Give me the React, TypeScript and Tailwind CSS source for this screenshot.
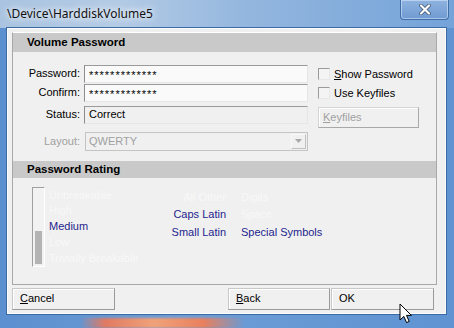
import React from "react";

function Input({ children, readOnly }: { children?: React.ReactNode; readOnly?: boolean }) {
  return (
    <div
      className={
        "h-[18px] w-[224px] flex items-center pl-[4px] border-t border-l border-t-[#9a9a9a] border-l-[#8c8c8c] border-b border-r border-b-[#e6e6e6] border-r-[#e6e6e6] " +
        (readOnly ? "bg-[#f0f0f0]" : "bg-[#fafafa]")
      }
    >
      {children}
    </div>
  );
}

function Button({ children, className }: { children: React.ReactNode; className?: string }) {
  return (
    <div
      className={
        "h-[22px] flex items-center pl-[7px] border border-t-[#c8c8c8] border-l-[#c8c8c8] border-b-[#9a9a9a] border-r-[#9a9a9a] shadow-[inset_1px_1px_0_#ffffff] bg-[#f0f0f0] text-[#000]" +
        " " +
        (className ?? "")
      }
    >
      {children}
    </div>
  );
}

function Check({ label, u }: { label: string; u?: boolean }) {
  return (
    <div className="flex items-center h-[12px]">
      <div className="w-[12px] h-[12px] border border-t-[#9a9a9a] border-l-[#9a9a9a] border-b-[#e8e8e8] border-r-[#e8e8e8] bg-[#f4f4f4]" />
      <span className="ml-[4px] leading-[12px]">
        {u ? (
          <>
            <span className="underline underline-offset-[1px]">S</span>
            {label.slice(1)}
          </>
        ) : (
          label
        )}
      </span>
    </div>
  );
}

export default function App() {
  const inactive = "text-[#f8f8f8]";
  const active = "text-[#1e1e8e]";
  return (
    <div
      className="w-[454px] h-[328px] relative overflow-hidden flex flex-col bg-[linear-gradient(90deg,#5c8fcf_0%,#6d9dd6_40%,#5f93d2_100%)]"
      style={{ fontFamily: '"Liberation Sans", Arial, sans-serif' }}
    >
      {/* title bar */}
      <div className="h-[28px] flex items-start bg-[linear-gradient(90deg,#a9c3e0_0%,#b4cbe5_25%,#93b6de_55%,#74a3d9_100%)]">
        <span
          className="ml-[7px] mt-[5px] text-[12px] leading-[18px] text-[#111] [text-shadow:0_0_6px_#ffffff,0_0_10px_#ffffff]"
          style={{ fontFamily: '"Noto Sans", "Open Sans", sans-serif' }}
        >
          \Device\HarddiskVolume5
        </span>
        <div className="ml-auto mr-[5px] w-[49px] h-[20px] rounded-b-[4px] border border-t-0 border-[#3f6da6] shadow-[inset_0_0_0_1px_rgba(220,235,255,0.55)] bg-[linear-gradient(180deg,#8fb3df,#6f9ad2)] flex items-center justify-center">
          <svg width="12" height="11" viewBox="0 0 12 11">
            <path d="M2 1.5 L10 9.5 M10 1.5 L2 9.5" stroke="#3a4f6a" strokeWidth="3.6" strokeLinecap="round" />
            <path d="M2 1.5 L10 9.5 M10 1.5 L2 9.5" stroke="#ffffff" strokeWidth="2.2" strokeLinecap="round" />
          </svg>
        </div>
      </div>

      {/* client area */}
      <div className="ml-[7px] w-[439px] h-[289px] border border-[#fbfcfe] outline outline-1 outline-[#3c6aa3] bg-[#f0f0f0] text-[11px] text-black flex flex-col">
        <div className="ml-[4px] mt-[3px] w-[425px] h-[253px] border-x border-b border-[#a8a8a8] border-t border-t-[#ffffff] flex flex-col">
          {/* Volume Password header */}
          <div className="h-[19px] bg-[#c9c9c9] flex items-center pl-[14px] text-[11.5px] font-bold">Volume Password</div>

          <div className="flex mt-[13px]">
            <div className="flex flex-col">
              <div className="flex items-center">
                <span className="w-[67px] text-right">Password:</span>
                <div className="ml-[4px]">
                  <Input>
                    <span className="tracking-[1px] text-[11px] leading-[10px] pt-[3px]">*************</span>
                  </Input>
                </div>
              </div>
              <div className="flex items-center mt-[1px]">
                <span className="w-[67px] text-right">Confirm:</span>
                <div className="ml-[4px]">
                  <Input>
                    <span className="tracking-[1px] text-[11px] leading-[10px] pt-[3px]">*************</span>
                  </Input>
                </div>
              </div>
              <div className="flex items-center mt-[4px]">
                <span className="w-[67px] text-right">Status:</span>
                <div className="ml-[4px]">
                  <Input readOnly>Correct</Input>
                </div>
              </div>
              <div className="flex items-center mt-[8px]">
                <span className="w-[67px] text-right text-[#a0a0a0]">Layout:</span>
                <div className="ml-[5px] h-[19px] w-[223px] flex items-center border border-[#c4c4c4] bg-[#f0f0f0] text-[#a0a0a0] pl-[3px]">
                  <span>QWERTY</span>
                  <div className="ml-auto mr-[1px] w-[15px] h-[15px] border border-t-[#f8f8f8] border-l-[#f8f8f8] border-b-[#c0c0c0] border-r-[#c0c0c0] flex items-center justify-center">
                    <svg width="7" height="4" viewBox="0 0 7 4">
                      <path d="M0 0 L7 0 L3.5 4 Z" fill="#a8a8a8" />
                    </svg>
                  </div>
                </div>
              </div>
            </div>

            <div className="flex flex-col ml-[10px]">
              <div className="mt-[3px]">
                <Check label="Show Password" u />
              </div>
              <div className="mt-[7px]">
                <Check label="Use Keyfiles" />
              </div>
              <div className="mt-[8px] w-[101px] h-[21px] flex items-center pl-[4px] border border-t-[#d4d4d4] border-l-[#d4d4d4] border-b-[#a8a8a8] border-r-[#a8a8a8] shadow-[inset_1px_1px_0_#ffffff] text-[#a0a0a0]">
                <span>
                  <span className="underline underline-offset-[1px]">K</span>eyfiles
                </span>
              </div>
            </div>
          </div>

          {/* Password Rating header */}
          <div className="mt-[10px] h-[17px] bg-[#c9c9c9] flex items-center pl-[14px] text-[11.5px] font-bold">Password Rating</div>

          <div className="flex mt-[9px]">
            <div className="ml-[19px] w-[13px] h-[80px] border border-t-[#a0a0a0] border-l-[#a0a0a0] border-b-[#ffffff] border-r-[#ffffff] bg-[#f2f2f2] flex flex-col justify-end p-[2px]">
              <div className="h-[33px] bg-[#b4b4b4]" />
            </div>
            <div className="ml-[4px] w-[120px] flex flex-col mt-[1px]">
              <span className={"h-[15.75px] leading-[15.75px] " + inactive}>Unbreakable</span>
              <span className={"h-[15.75px] leading-[15.75px] " + inactive}>High</span>
              <span className={"h-[15.75px] leading-[15.75px] " + active}>Medium</span>
              <span className={"h-[15.75px] leading-[15.75px] " + inactive}>Low</span>
              <span className={"h-[15.75px] leading-[15.75px] " + inactive}>Trivially Breakable</span>
            </div>
            <div className="w-[57px] flex flex-col items-end mt-[2px]">
              <span className={"h-[17.5px] leading-[17.5px] " + inactive}>All Other</span>
              <span className={"h-[17.5px] leading-[17.5px] " + active}>Caps Latin</span>
              <span className={"h-[17.5px] leading-[17.5px] " + active}>Small Latin</span>
            </div>
            <div className="ml-[15px] flex flex-col mt-[2px]">
              <span className={"h-[17.5px] leading-[17.5px] " + inactive}>Digits</span>
              <span className={"h-[17.5px] leading-[17.5px] " + inactive}>Space</span>
              <span className={"h-[17.5px] leading-[17.5px] " + active}>Special Symbols</span>
            </div>
          </div>
        </div>

        {/* bottom buttons */}
        <div className="flex mt-[3px] ml-[4px]">
          <Button className="w-[103px]">
            <span>
              <span className="underline underline-offset-[1px]">C</span>ancel
            </span>
          </Button>
          <Button className="ml-[113px] w-[102px]">
            <span>
              <span className="underline underline-offset-[1px]">B</span>ack
            </span>
          </Button>
          <Button className="ml-[1px] w-[103px]">OK</Button>
        </div>
      </div>

      {/* bottom frame glow */}
      <div className="flex-1 relative">
        <div className="mt-[4px] ml-[80px] w-[165px] h-[10px] bg-[linear-gradient(90deg,rgba(230,110,90,0)_0%,#e07a62_15%,#f0a27a_45%,#e8805e_75%,rgba(230,110,90,0)_100%)] blur-[1px]" />
      </div>

      {/* mouse cursor */}
      <svg className="absolute left-[399px] top-[303px]" width="14" height="21" viewBox="0 0 14 21">
        <path
          d="M1 1 L1 17 L4.8 13.4 L7.6 19.6 L10.2 18.4 L7.5 12.4 L12.4 12.4 Z"
          fill="#ffffff"
          stroke="#000000"
          strokeWidth="1"
          strokeLinejoin="miter"
        />
      </svg>
    </div>
  );
}
